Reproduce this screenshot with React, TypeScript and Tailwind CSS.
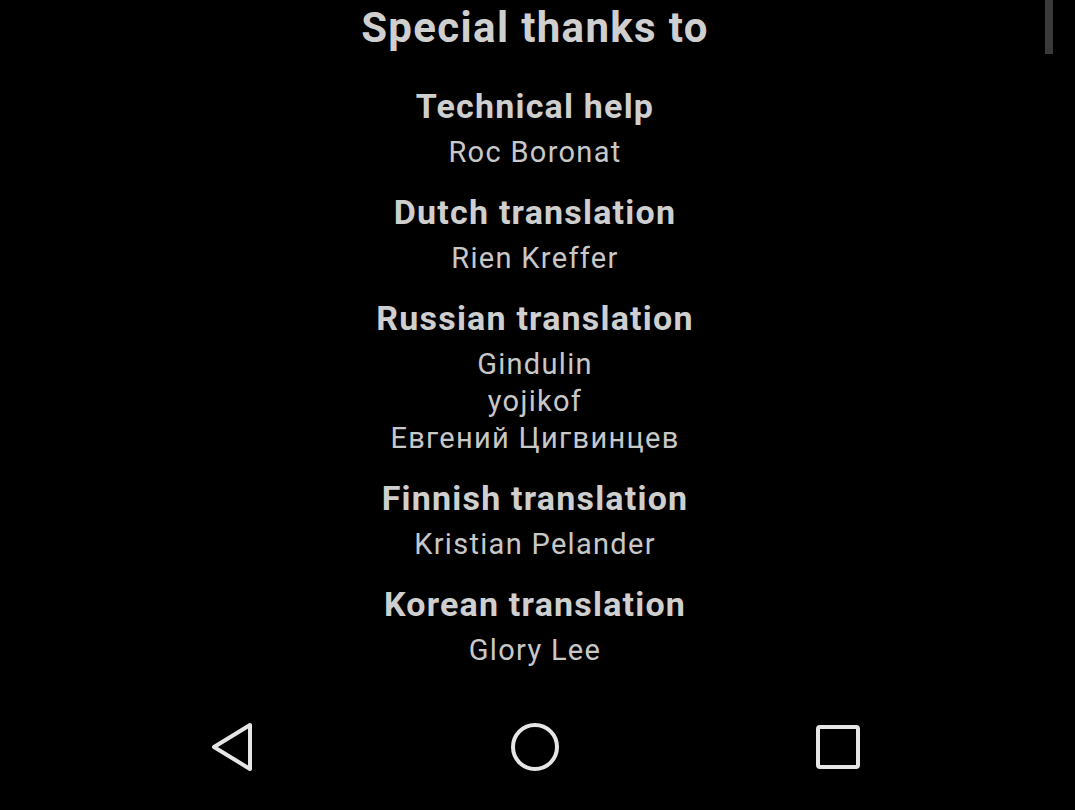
import React from "react";

type Credit = { title: string; names: string[] };

const credits: Credit[] = [
  { title: "Technical help", names: ["Roc Boronat"] },
  { title: "Dutch translation", names: ["Rien Kreffer"] },
  { title: "Russian translation", names: ["Gindulin", "yojikof", "Евгений Цигвинцев"] },
  { title: "Finnish translation", names: ["Kristian Pelander"] },
  { title: "Korean translation", names: ["Glory Lee"] },
];

function BackIcon() {
  return (
    <svg width="44" height="50" viewBox="0 0 44 50" fill="none">
      <path
        d="M40 3 L40 47 L4 25 Z"
        stroke="#e6e6e6"
        strokeWidth="4"
        strokeLinejoin="round"
      />
    </svg>
  );
}

function HomeIcon() {
  return (
    <svg width="50" height="50" viewBox="0 0 50 50" fill="none">
      <circle cx="25" cy="25" r="22" stroke="#e6e6e6" strokeWidth="4" />
    </svg>
  );
}

function RecentsIcon() {
  return (
    <svg width="46" height="46" viewBox="0 0 46 46" fill="none">
      <rect x="3" y="3" width="40" height="40" rx="2" stroke="#e6e6e6" strokeWidth="4" />
    </svg>
  );
}

export default function App() {
  return (
    <div
      className="relative w-[1075px] h-[810px] bg-black flex flex-col overflow-hidden"
      style={{ fontFamily: "Roboto, 'Noto Sans', sans-serif" }}
    >
      <div className="absolute right-[22px] top-0 w-[8px] h-[54px] bg-[#3a3a3a]" />

      <main className="w-[1070px] flex flex-col items-center pt-[4px] text-[#cfcfcf]">
        <h1 className="text-[42px] leading-[48px] font-bold tracking-[1.35px]">Special thanks to</h1>
        <div className="mt-[32px] flex flex-col items-center gap-[19px]">
          {credits.map((c) => (
            <section key={c.title} className="flex flex-col items-center">
              <h2 className="text-[34px] leading-[44px] font-bold tracking-[1.2px] mb-[6px]">
                {c.title}
              </h2>
              {c.names.map((n) => (
                <p key={n} className="text-[29px] leading-[37px] tracking-[1.3px] text-[#c8c8c8]">
                  {n}
                </p>
              ))}
            </section>
          ))}
        </div>
      </main>

      <nav className="mt-auto h-[126px] w-[1070px] flex items-center justify-center gap-[243px] pb-[1px]">
        <div className="w-[60px] flex justify-center">
          <BackIcon />
        </div>
        <div className="w-[60px] flex justify-center">
          <HomeIcon />
        </div>
        <div className="w-[60px] flex justify-center">
          <RecentsIcon />
        </div>
      </nav>
    </div>
  );
}
